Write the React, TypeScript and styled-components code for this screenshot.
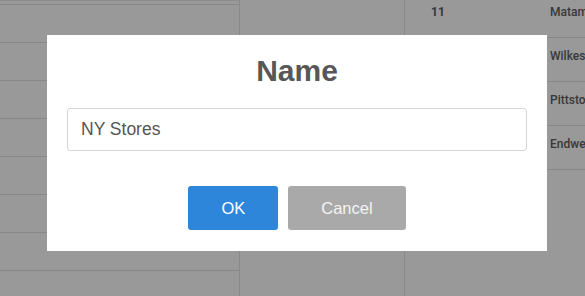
import React from "react";
import styled, { createGlobalStyle } from "styled-components";

const Global = createGlobalStyle`
  html, body { margin: 0; padding: 0; background: #fff; }
  body { width: 585px; height: 296px; overflow: hidden; }
  * { box-sizing: border-box; }
`;

const Page = styled.div`
  width: 585px;
  height: 296px;
  overflow: hidden;
  display: grid;
  grid-template-columns: 240px 165px 180px;
  font-family: Roboto, "Liberation Sans", sans-serif;
`;

const LeftCol = styled.div`
  border-right: 1px solid #e4e4e4;
  display: flex;
  flex-direction: column;
`;

const LeftCap = styled.div`
  height: 5px;
  flex: none;
  border-top: 1px solid #ececec;
  border-bottom: 1px solid #e2e2e2;
`;

const LeftRow = styled.div`
  height: 38px;
  flex: none;
  border-bottom: 1px solid #e2e2e2;
`;

const MidCol = styled.div`
  border-right: 1px solid #e4e4e4;
`;

const RightCol = styled.div`
  display: flex;
  flex-direction: column;
  margin-top: -6px;
  overflow: hidden;
`;

const DataRow = styled.div`
  height: 44px;
  flex: none;
  border-bottom: 1px solid #e2e2e2;
  display: grid;
  grid-template-columns: 119px 1fr;
  padding: 10px 0 0 26px;
  font-size: 12px;
  line-height: 16px;
  font-weight: 500;
  color: #5e5e5e;
  white-space: nowrap;
`;

const NumCell = styled.span`
  font-weight: 700;
`;

const Overlay = styled.div`
  position: fixed;
  inset: 0;
  background: rgba(0, 0, 0, 0.4);
  display: flex;
  align-items: flex-start;
  justify-content: flex-start;
  padding: 35px 0 0 47px;
`;

const Modal = styled.div`
  width: 500px;
  height: 216px;
  background: #fff;
  padding: 18px 20px 21px;
  display: flex;
  flex-direction: column;
  font-family: "Liberation Sans", Arial, sans-serif;
`;

const Title = styled.h2`
  margin: 0;
  font-size: 30px;
  line-height: 36px;
  font-weight: 700;
  color: #575757;
  text-align: center;
`;

const Input = styled.input`
  margin-top: 19px;
  width: 100%;
  height: 43px;
  border: 1px solid #d6d6d6;
  border-radius: 3px;
  padding: 0 13px;
  font-family: "Liberation Sans", Arial, sans-serif;
  font-size: 17.5px;
  color: #555;
  outline: none;
  background: #fff;
`;

const Actions = styled.div`
  margin-top: 35px;
  display: flex;
  justify-content: center;
  gap: 10px;
`;

const Button = styled.button<{ $variant: "primary" | "secondary" }>`
  height: 44px;
  padding: 0 33px;
  border: none;
  border-radius: 3px;
  font-family: "Liberation Sans", Arial, sans-serif;
  font-size: 16.5px;
  color: ${(p) => (p.$variant === "primary" ? "#fff" : "#f4f4f4")};
  background: ${(p) => (p.$variant === "primary" ? "#2d86d9" : "#a9a9a9")};
  cursor: pointer;
`;

const rows = [
  { n: "11", city: "Matamoras" },
  { n: "", city: "Wilkes-Barre" },
  { n: "", city: "Pittston" },
  { n: "", city: "Endwell" },
];

export default function App() {
  return (
    <>
      <Global />
      <Page>
        <LeftCol>
          <LeftCap />
          {Array.from({ length: 8 }).map((_, i) => (
            <LeftRow key={i} />
          ))}
        </LeftCol>
        <MidCol />
        <RightCol>
          {rows.map((r, i) => (
            <DataRow key={i}>
              <NumCell>{r.n}</NumCell>
              <span>{r.city}</span>
            </DataRow>
          ))}
        </RightCol>
      </Page>
      <Overlay>
        <Modal>
          <Title>Name</Title>
          <Input defaultValue="NY Stores" />
          <Actions>
            <Button $variant="primary">OK</Button>
            <Button $variant="secondary">Cancel</Button>
          </Actions>
        </Modal>
      </Overlay>
    </>
  );
}
